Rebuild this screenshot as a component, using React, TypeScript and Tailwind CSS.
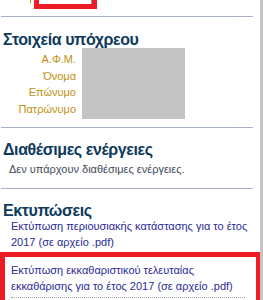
export default function App() {
  const font = { fontFamily: '"Liberation Sans", Arial, sans-serif' };
  const heading = "pl-[3px] text-[16px] font-bold leading-[20px] tracking-[-0.4px] text-[#0e3a5e]";
  return (
    <div className="relative h-[300px] w-[263px] overflow-hidden bg-white" style={font}>
      <div className="absolute right-0 top-0 h-full w-[3px] bg-[#c4c4c4]" />
      <div className="w-[259px]">
        <div className="relative h-[9px]">
          <div className="absolute left-[30px] top-0 h-[3px] w-[1px] bg-[#b08a30]" />
          <div className="absolute left-[34px] top-[-10px] h-[19px] w-[63px] border-[5px] border-[#ee1c25] bg-white">
            <div className="h-full w-full border-r border-[#8090b0]" />
          </div>
        </div>
        <div className="mx-[1px] mt-[7px] w-[252px] border-t border-[#a9b3c6]" />

        <h2 className={`mt-[13px] ${heading}`}>Στοιχεία υπόχρεου</h2>
        <div className="mt-[-2px] flex">
          <div className="flex w-[76px] flex-col items-end pt-[3px] text-[11px] leading-[16.5px] text-[#c09010]">
            <span>Α.Φ.Μ.</span>
            <span>Όνομα</span>
            <span>Επώνυμο</span>
            <span>Πατρώνυμο</span>
          </div>
          <div className="ml-[6px] h-[71px] w-[103px] bg-[#c3c3c3]" />
        </div>
        <div className="mx-[1px] mt-[8px] w-[252px] border-t border-[#a9b3c6]" />

        <h2 className={`mt-[12px] ${heading}`}>Διαθέσιμες ενέργειες</h2>
        <p className="mt-[1px] pl-[9px] text-[11px] leading-[16px] text-[#3c4a5a]">Δεν υπάρχουν διαθέσιμες ενέργειες.</p>
        <div className="mx-[1px] mt-[11px] w-[252px] border-t border-[#a9b3c6]" />

        <h2 className={`mt-[12px] ${heading}`}>Εκτυπώσεις</h2>
        <a className="mt-[-3px] block pl-[11px] pr-[6px] text-[11px] leading-[16px] text-[#2a2a98]">
          Εκτύπωση περιουσιακής κατάστασης για το έτος 2017 (σε αρχείο .pdf)
        </a>
        <div className="mt-[2px] h-[60px] w-[261px] border-[5px] border-[#ee1c25] pl-[6px] pr-[8px] pt-[5px]">
          <a className="block text-[11px] leading-[16px] text-[#2a2a98]">
            Εκτύπωση εκκαθαριστικού τελευταίας εκκαθάρισης για το έτος 2017 (σε αρχείο .pdf)
          </a>
          <div className="mt-[3px] w-[234px] border-t border-dotted border-[#a0a0a0]" />
        </div>
      </div>
    </div>
  );
}
